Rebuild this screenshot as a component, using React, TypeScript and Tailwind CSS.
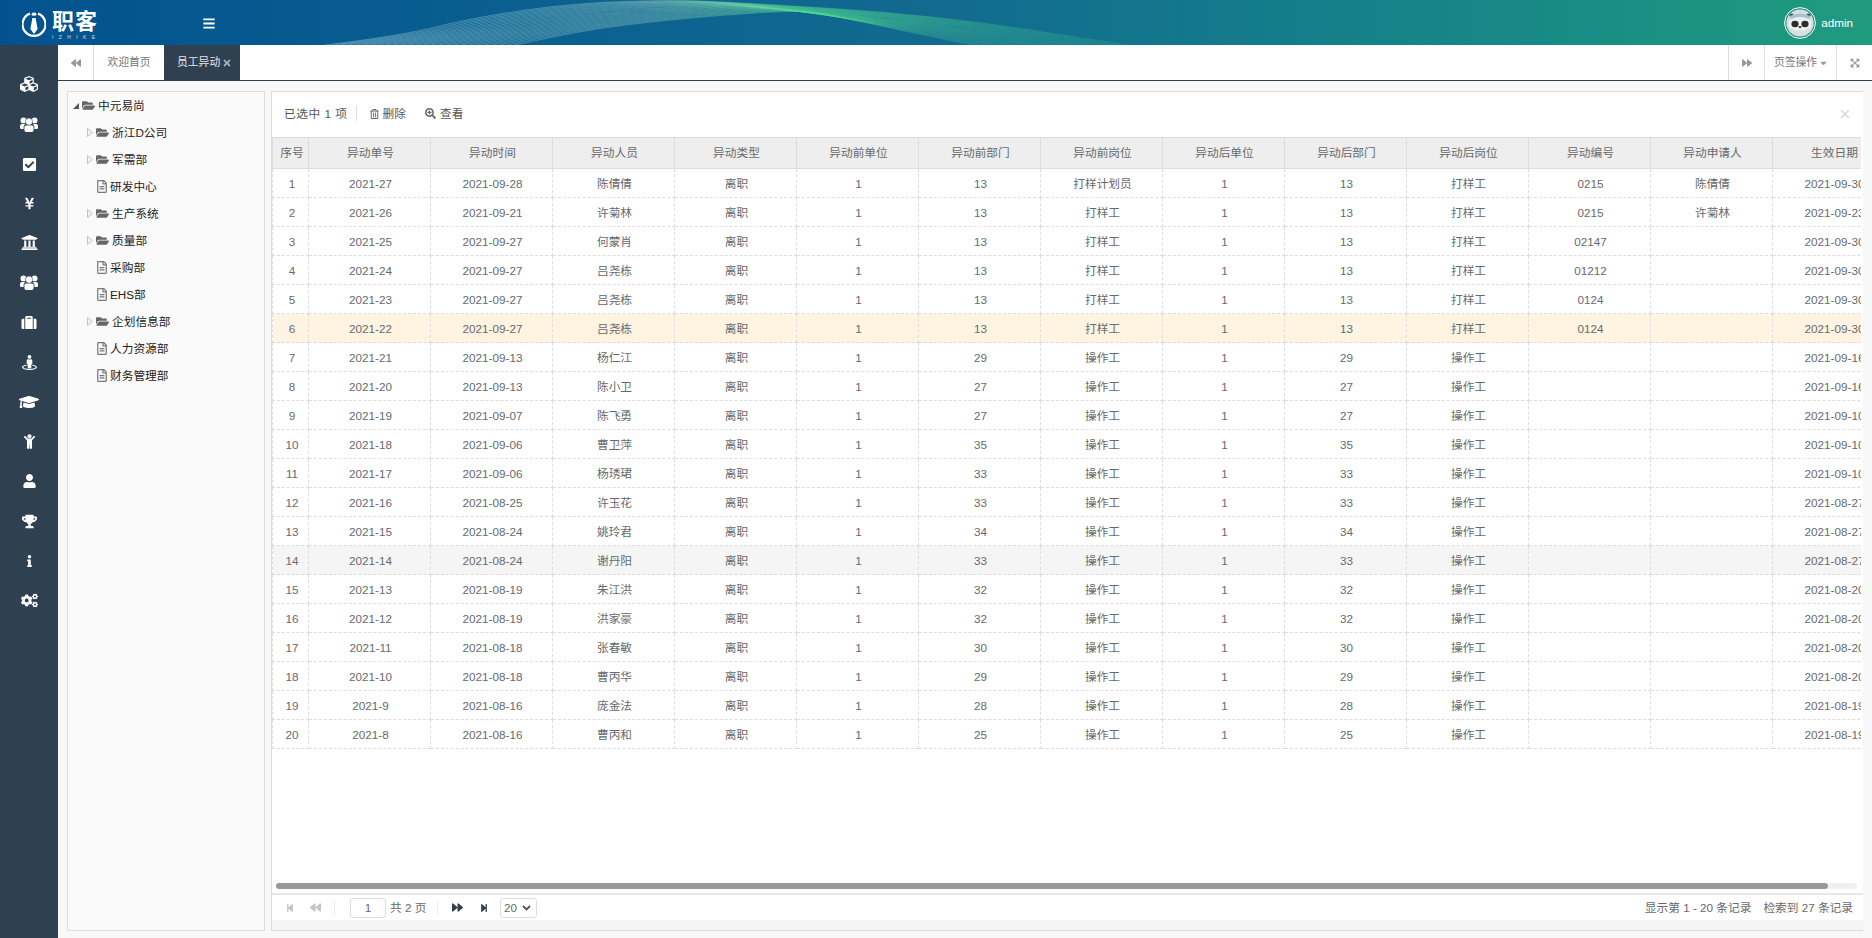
import {
  FaBackward,
  FaBars,
  FaCaretDown,
  FaCheckSquare,
  FaChild,
  FaCogs,
  FaCubes,
  FaExpandArrowsAlt,
  FaFolderOpen,
  FaForward,
  FaGraduationCap,
  FaInfo,
  FaRegFileAlt,
  FaRegTrashAlt,
  FaSearchPlus,
  FaStepBackward,
  FaStepForward,
  FaStreetView,
  FaSuitcase,
  FaTimes,
  FaTrophy,
  FaUniversity,
  FaUser,
  FaYenSign,
} from 'react-icons/fa'
import { X } from 'lucide-react'

function UsersIcon() {
  return (
    <svg width="18" height="15" viewBox="0 0 18 15" fill="#fff">
      <circle cx="3.4" cy="3.4" r="2.9" />
      <circle cx="14.6" cy="3.4" r="2.9" />
      <path d="M0 9 Q0 7 2 7 H5 L3.6 9.5 V12 H1.2 Q0 12 0 11 Z" />
      <path d="M18 9 Q18 7 16 7 H13 L14.4 9.5 V12 H16.8 Q18 12 18 11 Z" />
      <circle cx="9" cy="4.6" r="3.6" stroke="#2f4050" strokeWidth="0.6" />
      <path d="M4.4 10 Q4.4 8.4 6 8.4 H12 Q13.6 8.4 13.6 10 V13 Q13.6 15 11.6 15 H6.4 Q4.4 15 4.4 13 Z" />
    </svg>
  )
}

const sideIcons = [
  { icon: <FaCubes className="h-[18px] w-[18px]" />, h: 'h-[40px]' },
  { icon: <UsersIcon />, h: 'h-[40px]' },
  { icon: <FaCheckSquare className="h-[15px] w-[15px]" />, h: 'h-[40px]' },
  { icon: <FaYenSign className="h-[13px] w-[13px]" />, h: 'h-[38px]' },
  { icon: <FaUniversity className="h-[17px] w-[17px]" />, h: 'h-[40px]' },
  { icon: <UsersIcon />, h: 'h-[40px]' },
  { icon: <FaSuitcase className="h-[15px] w-[16px]" />, h: 'h-[40px]' },
  { icon: <FaStreetView className="h-[17px] w-[15px]" />, h: 'h-[40px]' },
  { icon: <FaGraduationCap className="h-[20px] w-[20px]" />, h: 'h-[40px]' },
  { icon: <FaChild className="h-[15px] w-[11px]" />, h: 'h-[39px]' },
  { icon: <FaUser className="h-[14px] w-[13px]" />, h: 'h-[40px]' },
  { icon: <FaTrophy className="h-[15px] w-[15px]" />, h: 'h-[40px]' },
  { icon: <FaInfo className="h-[12px] w-[7px]" />, h: 'h-[40px]' },
  { icon: <FaCogs className="h-[17px] w-[17px]" />, h: 'h-[39px]' },
]

const tree = [
  { name: '中元易尚', kind: 'root' },
  { name: '浙江D公司', kind: 'folder' },
  { name: '军需部', kind: 'folder' },
  { name: '研发中心', kind: 'file' },
  { name: '生产系统', kind: 'folder' },
  { name: '质量部', kind: 'folder' },
  { name: '采购部', kind: 'file' },
  { name: 'EHS部', kind: 'file' },
  { name: '企划信息部', kind: 'folder' },
  { name: '人力资源部', kind: 'file' },
  { name: '财务管理部', kind: 'file' },
]

const heads = ['异动单号', '异动时间', '异动人员', '异动类型', '异动前单位', '异动前部门', '异动前岗位', '异动后单位', '异动后部门', '异动后岗位', '异动编号', '异动申请人', '生效日期']

// 单号, 时间, 人员, 部门, 前岗位, 后岗位, 编号, 申请人, 生效
const rows = [
  ['2021-27', '2021-09-28', '陈倩倩', '13', '打样计划员', '打样工', '0215', '陈倩倩', '2021-09-30'],
  ['2021-26', '2021-09-21', '许菊林', '13', '打样工', '打样工', '0215', '许菊林', '2021-09-23'],
  ['2021-25', '2021-09-27', '何蒙肖', '13', '打样工', '打样工', '02147', '', '2021-09-30'],
  ['2021-24', '2021-09-27', '吕尧栋', '13', '打样工', '打样工', '01212', '', '2021-09-30'],
  ['2021-23', '2021-09-27', '吕尧栋', '13', '打样工', '打样工', '0124', '', '2021-09-30'],
  ['2021-22', '2021-09-27', '吕尧栋', '13', '打样工', '打样工', '0124', '', '2021-09-30'],
  ['2021-21', '2021-09-13', '杨仁江', '29', '操作工', '操作工', '', '', '2021-09-16'],
  ['2021-20', '2021-09-13', '陈小卫', '27', '操作工', '操作工', '', '', '2021-09-16'],
  ['2021-19', '2021-09-07', '陈飞勇', '27', '操作工', '操作工', '', '', '2021-09-10'],
  ['2021-18', '2021-09-06', '曹卫萍', '35', '操作工', '操作工', '', '', '2021-09-10'],
  ['2021-17', '2021-09-06', '杨琇珺', '33', '操作工', '操作工', '', '', '2021-09-10'],
  ['2021-16', '2021-08-25', '许玉花', '33', '操作工', '操作工', '', '', '2021-08-27'],
  ['2021-15', '2021-08-24', '姚玲君', '34', '操作工', '操作工', '', '', '2021-08-27'],
  ['2021-14', '2021-08-24', '谢丹阳', '33', '操作工', '操作工', '', '', '2021-08-27'],
  ['2021-13', '2021-08-19', '朱江洪', '32', '操作工', '操作工', '', '', '2021-08-20'],
  ['2021-12', '2021-08-19', '洪家豪', '32', '操作工', '操作工', '', '', '2021-08-20'],
  ['2021-11', '2021-08-18', '张春敏', '30', '操作工', '操作工', '', '', '2021-08-20'],
  ['2021-10', '2021-08-18', '曹丙华', '29', '操作工', '操作工', '', '', '2021-08-20'],
  ['2021-9', '2021-08-16', '庞金法', '28', '操作工', '操作工', '', '', '2021-08-19'],
  ['2021-8', '2021-08-16', '曹丙和', '25', '操作工', '操作工', '', '', '2021-08-19'],
]

const waveTop = [[325, 45], [400, 36], [476, 17], [576, 3], [668, 0], [729, 2], [935, 15], [1127, 45]]
const waveBottom = [[515, 45], [570, 33], [630, 24], [720, 15], [805, 10], [840, 17], [900, 30], [973, 45]]

function wavePath(t: number) {
  const pts = waveTop.map((p, i) => [p[0] + (waveBottom[i][0] - p[0]) * t, p[1] + (waveBottom[i][1] - p[1]) * t])
  let d = `M${pts[0][0]},${pts[0][1]}`
  for (let i = 1; i < pts.length - 1; i++) {
    const mx = (pts[i][0] + pts[i + 1][0]) / 2
    const my = (pts[i][1] + pts[i + 1][1]) / 2
    d += ` Q${pts[i][0]},${pts[i][1]} ${mx},${my}`
  }
  d += ` L${pts[pts.length - 1][0]},${pts[pts.length - 1][1]}`
  return d
}

function Wave() {
  const lines = Array.from({ length: 26 }, (_, i) => wavePath(i / 25))
  return (
    <svg className="pointer-events-none absolute inset-0" width="1872" height="45" viewBox="0 0 1872 45" fill="none">
      <defs>
        <linearGradient id="waveStroke" gradientUnits="userSpaceOnUse" x1="325" y1="0" x2="1127" y2="0">
          <stop offset="0" stopColor="#b9dcf0" stopOpacity="0.65" />
          <stop offset="0.4" stopColor="#a5dcc8" stopOpacity="0.55" />
          <stop offset="0.6" stopColor="#4fd68c" stopOpacity="0.7" />
          <stop offset="1" stopColor="#4fd68c" stopOpacity="0.25" />
        </linearGradient>
      </defs>
      {lines.map((d, i) => (
        <path key={i} d={d} stroke="url(#waveStroke)" strokeWidth="0.6" />
      ))}
    </svg>
  )
}

function Logo() {
  return (
    <div className="flex items-start">
      <svg width="24" height="28" viewBox="0 0 24 28" fill="none" className="mt-[11px] ml-[22px]">
        <path d="M8 2.6 A11.5 11.5 0 1 0 16 2.6" stroke="#fff" strokeWidth="2.2" fill="none" />
        <ellipse cx="12" cy="3.2" rx="2.4" ry="1.6" fill="#fff" />
        <path d="M10.4 7 L13.6 7 L15.6 18 L12 23 L8.4 18 Z" fill="#fff" />
      </svg>
      <div className="ml-[6px] mt-[11px] flex flex-col items-start text-white">
        <span className="text-[22px] leading-[22px] font-bold tracking-[1px]">职客</span>
        <span className="mt-[1px] text-[5px] leading-[6px] tracking-[5.4px] opacity-80">IZHIKE</span>
      </div>
    </div>
  )
}

function Avatar() {
  return (
    <svg width="32" height="32" viewBox="0 0 32 32" fill="none">
      <circle cx="16" cy="16" r="15.4" fill="#1f9a80" stroke="#fff" strokeWidth="1" />
      <circle cx="16" cy="16" r="13.6" fill="#d8dee0" />
      <circle cx="7.5" cy="8.5" r="2" fill="#4a4f52" />
      <circle cx="24.5" cy="8.5" r="2" fill="#4a4f52" />
      <path d="M5 14 Q16 5 27 14 L27 20 Q16 28 5 20 Z" fill="#eef1f2" />
      <path d="M6 9 Q16 4 26 9 L25 12 Q16 8 7 12 Z" fill="#a9c2d4" />
      <ellipse cx="11" cy="17" rx="3.6" ry="3.2" fill="#2a2c2e" />
      <ellipse cx="21" cy="17" rx="3.6" ry="3.2" fill="#2a2c2e" />
      <ellipse cx="16" cy="20" rx="1.5" ry="1" fill="#2a2c2e" />
    </svg>
  )
}

function TreeRow({ name, kind }: { name: string; kind: string }) {
  const arrow = kind === 'root' ? (
    <svg width="6" height="6" viewBox="0 0 6 6" className="mr-[3px] ml-[5px] shrink-0">
      <path d="M6 0 V6 H0 Z" fill="#555" />
    </svg>
  ) : kind === 'folder' ? (
    <svg width="6" height="9" viewBox="0 0 6 9" className="mr-[3px] ml-[19px] shrink-0">
      <path d="M.5 .5 L5.5 4.5 L.5 8.5 Z" fill="#f2f2f2" stroke="#c4c4c4" />
    </svg>
  ) : (
    <span className="w-[29px] shrink-0" />
  )
  return (
    <div className="flex h-[27px] items-center text-[#222]">
      {arrow}
      {kind === 'file' ? (
        <FaRegFileAlt className="h-[13px] w-[10px] shrink-0 text-[#777]" />
      ) : (
        <FaFolderOpen className="h-[13px] w-[13px] shrink-0 text-[#666]" />
      )}
      <span className="ml-[3px]">{name}</span>
    </div>
  )
}

export default function App() {
  return (
    <div className="flex h-screen w-[1872px] flex-col overflow-hidden bg-[#f8f8f8] font-['Liberation_Sans','Noto_Sans_CJK_SC',sans-serif] text-[11.7px] text-[#676a6c]">
      <header className="relative flex h-[45px] shrink-0 items-start bg-gradient-to-r from-[#03528f] via-[#126a90] to-[#209b7e]">
        <Wave />
        <div className="relative w-[203px] shrink-0"><Logo /></div>
        <FaBars className="relative mt-[17px] h-[13px] w-[12px] text-white" />
        <div className="relative ml-auto mr-[19px] flex h-[45px] items-center gap-[5px] text-white">
          <Avatar />
          <span>admin</span>
        </div>
      </header>

      <div className="flex min-h-0 flex-1">
        <aside className="flex w-[58px] shrink-0 flex-col items-center bg-[#2f4050] pt-[19px] text-white">
          {sideIcons.map((s, i) => (
            <div key={i} className={`flex w-full items-center justify-center ${s.h}`}>{s.icon}</div>
          ))}
        </aside>

        <main className="flex min-w-0 flex-1 flex-col">
          <nav className="flex h-[36px] shrink-0 border-b border-[#2f4050] bg-white text-[10.8px]">
            <div className="flex w-[36px] items-center justify-center border-r border-[#ddd] text-[#999]">
              <FaBackward className="h-[10px] w-[10px]" />
            </div>
            <div className="flex w-[70px] items-center justify-center text-[#777]">欢迎首页</div>
            <div className="flex w-[76px] items-center gap-[3px] bg-[#2f4050] pl-[13px] text-[#e6e9ec]">
              员工异动
              <FaTimes className="h-[10px] w-[8px] text-[#a8b0b8]" />
            </div>
            <div className="ml-auto flex w-[36px] items-center justify-center border-l border-[#ddd] text-[#999]">
              <FaForward className="h-[10px] w-[10px]" />
            </div>
            <div className="flex w-[72px] items-center justify-center gap-[3px] border-l border-[#ddd] text-[#777]">
              页签操作
              <FaCaretDown className="h-[10px] w-[7px] text-[#999]" />
            </div>
            <div className="flex w-[36px] items-center justify-center border-l border-[#ddd] text-[#999]">
              <FaExpandArrowsAlt className="h-[10px] w-[10px]" />
            </div>
          </nav>

          <div className="flex min-h-0 flex-1 gap-[6px] pt-[10px] pr-[9px] pb-[7px] pl-[9px]">
            <section className="w-[198px] shrink-0 border border-[#ddd] bg-[#fafafa]">
              {tree.map((n) => (
                <TreeRow key={n.name} name={n.name} kind={n.kind} />
              ))}
            </section>

            <section className="flex min-w-0 flex-1 flex-col border-t border-b border-l border-[#ddd] bg-[#f5f5f5]">
              <div className="flex min-h-0 flex-1 flex-col bg-white">
                <div className="flex h-[45px] shrink-0 items-center pb-[2px] pl-[12px] text-[#555]">
                  <span className="tracking-[0.55px]">已选中 1 项</span>
                  <span className="mx-[8px] h-[15px] w-px bg-[#ddd]" />
                  <FaRegTrashAlt className="ml-[5px] h-[10px] w-[9px] text-[#666]" />
                  <span className="ml-[4px]">删除</span>
                  <FaSearchPlus className="ml-[19px] h-[11px] w-[11px] text-[#666]" />
                  <span className="ml-[4px]">查看</span>
                  <X className="mr-[11px] ml-auto h-[14px] w-[14px] text-[#d4d4d4]" />
                </div>

                <div className="mr-[2px] min-h-0 flex-1 overflow-hidden">
                  <table className="w-[1622px] table-fixed border-collapse text-center">
                    <colgroup>
                      <col className="w-[36px]" />
                      {heads.map((h) => (
                        <col key={h} className="w-[122px]" />
                      ))}
                    </colgroup>
                    <thead>
                      <tr className="h-[31px] bg-[#eee]">
                        <th className="border border-[#ddd] p-0 pl-[3px] font-normal">序号</th>
                        {heads.map((h) => (
                          <th key={h} className="border border-[#ddd] p-0 pl-[2px] font-normal">{h}</th>
                        ))}
                      </tr>
                    </thead>
                    <tbody>
                      {rows.map((r, i) => (
                        <tr key={r[0]} className={i === 5 ? 'h-[29px] bg-[#fff3e2]' : i === 13 ? 'h-[29px] bg-[#f5f5f5]' : 'h-[29px]'}>
                          <td className="border border-dashed border-[#ddd] p-0 pt-[1px] pl-[3px]">{i + 1}</td>
                          {[r[0], r[1], r[2], '离职', '1', r[3], r[4], '1', r[3], r[5], r[6], r[7], r[8]].map((v, j) => (
                            <td key={j} className="border border-dashed border-[#ddd] p-0 pt-[1px] pl-[2px]">{v}</td>
                          ))}
                        </tr>
                      ))}
                    </tbody>
                  </table>
                </div>

                <div className="h-[10px] shrink-0 px-[4px]">
                  <div className="h-[6px] w-[1581px] rounded-full bg-[#f0f0f0]">
                    <div className="h-[6px] w-[1552px] rounded-full bg-[#999]" />
                  </div>
                </div>

                <div className="flex h-[27px] shrink-0 items-center border-t-2 border-[#e7e7e7]">
                  <FaStepBackward className="ml-[14px] h-[10px] w-[8px] text-[#c4c4c4]" />
                  <FaBackward className="ml-[16px] h-[11px] w-[11px] text-[#c4c4c4]" />
                  <span className="ml-[13px] h-[14px] w-px bg-[#eee]" />
                  <span className="ml-[15px] flex h-[20px] w-[36px] items-center justify-center rounded-[3px] border border-[#ddd]">1</span>
                  <span className="ml-[4px] w-[36px] whitespace-nowrap">共 2 页</span>
                  <span className="ml-[11px] h-[14px] w-px bg-[#eee]" />
                  <FaForward className="ml-[14px] h-[11px] w-[11px] text-[#2f4050]" />
                  <FaStepForward className="ml-[17px] h-[10px] w-[8px] text-[#2f4050]" />
                  <span className="ml-[12px] flex h-[20px] w-[37px] items-center gap-[5px] rounded-[3px] border border-[#ddd] pl-[3px]">
                    20
                    <svg width="9" height="6" viewBox="0 0 9 6" fill="none"><path d="M1 1 L4.5 4.5 L8 1" stroke="#555" strokeWidth="1.8" /></svg>
                  </span>
                  <span className="ml-auto">显示第 1 - 20 条记录</span>
                  <span className="mr-[10px] ml-[12px]">检索到 27 条记录</span>
                </div>
              </div>
              <div className="h-[10px] shrink-0" />
            </section>
          </div>
        </main>
      </div>
    </div>
  )
}
